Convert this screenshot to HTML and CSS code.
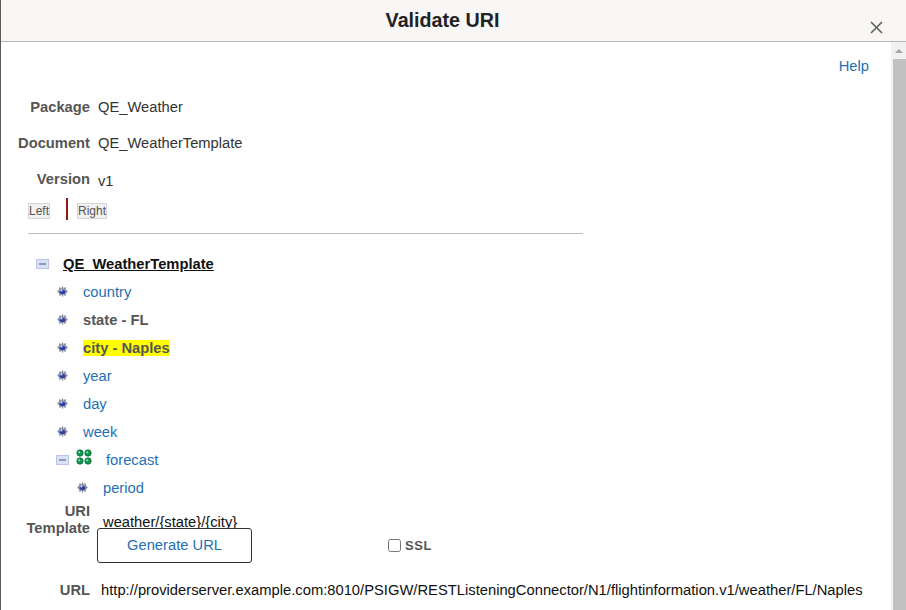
FILE: index.html
```html
<!DOCTYPE html>
<html lang="en">
<head>
  <meta charset="UTF-8">
  <title>Validate URI</title>
  <link rel="stylesheet" href="styles.css">
</head>
<body>
  <div class="modal">
    <!-- Title bar -->
    <div class="modal-header">
      <h1>Validate URI</h1>
      <svg class="close" width="13" height="13" viewBox="0 0 13 13"><path d="M1 1L12 12M12 1L1 12" stroke="#5f5f5f" stroke-width="1.6" fill="none"/></svg>
    </div>

    <div class="modal-main">
      <div class="content">
        <div class="help-row"><a class="link" href="#">Help</a></div>

        <!-- Document details -->
        <div class="field"><span class="label">Package</span><span class="value">QE_Weather</span></div>
        <div class="field"><span class="label">Document</span><span class="value">QE_WeatherTemplate</span></div>
        <div class="field"><span class="label">Version</span><span class="value version">v1</span></div>

        <div class="splitter">
          <span class="split-btn">Left</span>
          <span class="split-bar"></span>
          <span class="split-btn">Right</span>
        </div>
        <div class="rule"></div>

        <!-- Tree -->
        <div class="tree">
          <div class="tree-row root">
            <svg class="toggle" width="13" height="10" viewBox="0 0 13 10"><rect x="0.5" y="0.5" width="12" height="9" fill="#dbe1f3" stroke="#b9c4e6"/><rect x="3" y="4" width="7" height="2" fill="#8c9ac0"/></svg>
            <span class="root-name">QE_WeatherTemplate</span>
          </div>
          <div class="tree-row leaf"><svg class="star"><use href="#star"/></svg><a class="link" href="#">country</a></div>
          <div class="tree-row leaf"><svg class="star"><use href="#star"/></svg><span class="bold">state - FL</span></div>
          <div class="tree-row leaf"><svg class="star"><use href="#star"/></svg><span class="bold hilite">city - Naples</span></div>
          <div class="tree-row leaf"><svg class="star"><use href="#star"/></svg><a class="link" href="#">year</a></div>
          <div class="tree-row leaf"><svg class="star"><use href="#star"/></svg><a class="link" href="#">day</a></div>
          <div class="tree-row leaf"><svg class="star"><use href="#star"/></svg><a class="link" href="#">week</a></div>
          <div class="tree-row branch">
            <svg class="toggle" width="13" height="10" viewBox="0 0 13 10"><rect x="0.5" y="0.5" width="12" height="9" fill="#dbe1f3" stroke="#b9c4e6"/><rect x="3" y="4" width="7" height="2" fill="#8c9ac0"/></svg>
            <svg class="clover" width="16" height="16" viewBox="0 0 16 16">
              <g fill="#0c9a4c" stroke="#0b5f33" stroke-width="0.7"><circle cx="4" cy="4" r="3.2"/><circle cx="12" cy="4" r="3.2"/><circle cx="4" cy="12" r="3.2"/><circle cx="12" cy="12" r="3.2"/></g>
              <g fill="#9fe3bd"><circle cx="3.2" cy="3.2" r="1"/><circle cx="11.2" cy="3.2" r="1"/><circle cx="3.2" cy="11.2" r="1"/><circle cx="11.2" cy="11.2" r="1"/></g>
            </svg>
            <a class="link" href="#">forecast</a>
          </div>
          <div class="tree-row leaf nested"><svg class="star"><use href="#star"/></svg><a class="link" href="#">period</a></div>
        </div>

        <!-- URI template -->
        <div class="template-row">
          <span class="label">URI<br>Template</span>
          <span class="template-value">weather/{state}/{city}</span>
        </div>
        <div class="action-row">
          <button class="generate">Generate URL</button>
          <label class="ssl"><input type="checkbox">SSL</label>
        </div>
        <div class="url-row">
          <span class="label">URL</span>
          <span class="url-value">http://providerserver.example.com:8010/PSIGW/RESTListeningConnector/N1/flightinformation.v1/weather/FL/Naples</span>
        </div>
      </div>

      <!-- Scrollbar -->
      <div class="scrollbar">
        <div class="scroll-up"></div>
        <div class="scroll-thumb"></div>
      </div>
    </div>
  </div>

  <svg class="defs" width="0" height="0">
    <symbol id="star" viewBox="0 0 13 11">
      <path d="M1.5 5.5H11.5M3.5 1.5L9.5 9.5M9.5 1.5L3.5 9.5M6.5 0.5V10.5" stroke="#777c90" stroke-width="1.3"/>
      <ellipse cx="6.5" cy="5.5" rx="4.3" ry="3.3" fill="#8f96b4"/>
      <ellipse cx="6.5" cy="6" rx="3" ry="2" fill="#2f3f9e"/>
      <circle cx="5.4" cy="4.5" r="1" fill="#d3d9ee"/>
    </symbol>
  </svg>
</body>
</html>
```

FILE: styles.css
```css
html, body {
  margin: 0;
  height: 100%;
  overflow: hidden;
}
body {
  font-family: "Liberation Sans", Arial, sans-serif;
  font-size: 14.72px;
  color: #333;
  background-color: #fff;
}
.defs {
  position: absolute;
}
.modal {
  display: flex;
  flex-direction: column;
  height: 610px;
  border-left: 1px solid #5a5a5a;
  box-sizing: border-box;
}
.modal-header {
  position: relative;
  height: 41px;
  flex: none;
  background-color: #f8f7f5;
  border-bottom: 1px solid #b5b5b3;
  text-align: center;
}
.modal-header h1 {
  margin: 0;
  font-size: 19.7px;
  line-height: 40px;
  color: #222;
  padding-right: 22px;
}
.close {
  position: absolute;
  right: 23px;
  top: 21px;
}
.modal-main {
  flex: 1;
  display: flex;
  min-height: 0;
}
.content {
  flex: 1;
  min-width: 0;
  overflow: hidden;
}
.scrollbar {
  width: 15px;
  flex: none;
  overflow: hidden;
  background-color: #f1f1f1;
}
.scroll-up {
  width: 0;
  height: 0;
  margin: 7px auto 0;
  border-left: 4px solid transparent;
  border-right: 4px solid transparent;
  border-bottom: 4px solid #a3a3a3;
}
.scroll-thumb {
  height: 560px;
  margin: 6px 0 0 2px;
  background-color: #c1c1c1;
}
.link {
  color: #1f6fb5;
  text-decoration: none;
}
.help-row {
  height: 47px;
  padding: 16px 22px 0 0;
  box-sizing: border-box;
  text-align: right;
}
.field {
  display: flex;
  height: 36px;
  align-items: center;
}
.label {
  width: 89px;
  flex: none;
  text-align: right;
  font-weight: bold;
  color: #555;
  line-height: 17px;
}
.value {
  margin-left: 8px;
}
.version {
  padding-top: 3px;
}
.splitter {
  display: flex;
  align-items: center;
  height: 22px;
  margin: 2px 0 0 27px;
}
.split-btn {
  margin-top: 2px;
  font-size: 12px;
  line-height: 14px;
  color: #555;
  background-color: #f2f2f2;
  border: 1px solid #d5d5d5;
}
.split-bar {
  flex: none;
  width: 2px;
  height: 22px;
  margin: 0 9px 2px 16px;
  background-color: #8b1a1a;
}
.rule {
  width: 555px;
  height: 1px;
  margin: 12px 0 0 27px;
  background-color: #bdbdbd;
}
.tree {
  padding-top: 16px;
}
.tree-row {
  display: flex;
  align-items: center;
  height: 28px;
}
.root {
  padding-left: 35px;
}
.root-name {
  margin-left: 14px;
  font-weight: bold;
  color: #111;
  text-decoration: underline;
}
.leaf {
  padding-left: 55px;
}
.nested {
  padding-left: 75px;
}
.star {
  width: 13px;
  height: 11px;
  margin-right: 14px;
  position: relative;
  top: -1px;
}
.bold {
  font-weight: bold;
  color: #555;
}
.hilite {
  background-color: #ffff00;
}
.branch {
  padding-left: 55px;
}
.clover {
  margin: 0 14px 6px 7px;
}
.template-row {
  display: flex;
  height: 23px;
  margin-top: 1px;
  padding-bottom: 1px;
}
.template-value {
  margin: 11px 0 0 13px;
  color: #111;
  line-height: 17px;
  white-space: nowrap;
}
.action-row {
  display: flex;
  align-items: center;
  height: 36px;
  padding-left: 96px;
}
.generate {
  width: 155px;
  height: 35px;
  font-family: inherit;
  font-size: 14.72px;
  color: #1f6fb5;
  background-color: #fff;
  border: 1px solid #333;
  border-radius: 3px;
}
.ssl {
  display: flex;
  align-items: center;
  margin-left: 136px;
  font-weight: bold;
  font-size: 13px;
  color: #555;
  letter-spacing: 0.6px;
}
.ssl input {
  width: 13px;
  height: 13px;
  margin: 0 4px 0 0;
}
.url-row {
  display: flex;
  align-items: center;
  height: 30px;
  margin-top: 12px;
}
.url-value {
  margin-left: 11px;
  font-size: 14.76px;
  color: #111;
  white-space: nowrap;
}
```
